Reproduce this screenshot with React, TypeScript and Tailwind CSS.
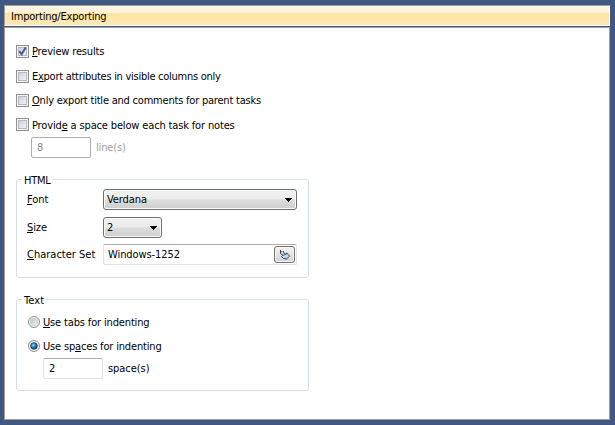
import type { ReactNode } from "react";

const U = ({ children }: { children: ReactNode }) => (
  <span className="underline decoration-1 underline-offset-[1px] [text-decoration-skip-ink:none]">{children}</span>
);

function Checkbox({ checked = false, className, children }: { checked?: boolean; className?: string; children: ReactNode }) {
  return (
    <label className={`flex h-[13px] items-center ${className ?? ""}`}>
      <svg width="13" height="13" className="shrink-0">
        <defs>
          <linearGradient id="box" x1="0" y1="0" x2="1" y2="1">
            <stop offset="0" stopColor="#cbcfd5" />
            <stop offset="1" stopColor="#f6f6f6" />
          </linearGradient>
        </defs>
        <rect x=".5" y=".5" width="12" height="12" fill="#f4f4f4" stroke="#8e8f8f" />
        <rect x="2.5" y="2.5" width="8" height="8" fill="url(#box)" stroke="#b5bac2" />
        {checked && <path d="M3.3 6.2 L5.6 9.2 L9.8 2.4" fill="none" stroke="#4a5f97" strokeWidth="2" />}
      </svg>
      <span className="ml-[3px] whitespace-nowrap">{children}</span>
    </label>
  );
}

function Radio({ checked = false, className, children }: { checked?: boolean; className?: string; children: ReactNode }) {
  return (
    <label className={`flex h-3 items-center ${className ?? ""}`}>
      <svg width="12" height="12" className="shrink-0">
        <defs>
          <linearGradient id="dot" x1="0" y1="0" x2="1" y2="1">
            <stop offset="0" stopColor="#bcc0c4" />
            <stop offset="1" stopColor="#f5f5f5" />
          </linearGradient>
          <radialGradient id="blue" cx=".4" cy=".38" r=".6">
            <stop offset="0" stopColor="#8fe4fa" />
            <stop offset=".5" stopColor="#2487b8" />
            <stop offset="1" stopColor="#0d3f68" />
          </radialGradient>
        </defs>
        <circle cx="6" cy="6" r="5.5" fill="#f4f4f4" stroke="#8e8f8f" />
        <circle cx="6" cy="6" r="3.8" fill="url(#dot)" stroke="#c3c6c9" strokeWidth=".6" />
        {checked && <circle cx="6" cy="6" r="3.3" fill="url(#blue)" stroke="#16405f" strokeWidth=".6" />}
      </svg>
      <span className="ml-[3px] whitespace-nowrap">{children}</span>
    </label>
  );
}

function Select({ className, children }: { className: string; children: ReactNode }) {
  return (
    <div className={`flex h-[21px] items-center justify-between rounded-[3px] border border-[#707070] bg-[linear-gradient(#f2f2f2_0%,#ebebeb_48%,#dddddd_52%,#cfcfcf_100%)] pr-[3px] pl-[3px] shadow-[inset_0_0_0_1px_#fafafa] ${className}`}>
      <span>{children}</span>
      <svg width="8" height="4" shapeRendering="crispEdges">
        <path d="M0 0h7v1h-1v1h-1v1h-1v1h-1v-1h-1v-1h-1v-1h-1z" />
      </svg>
    </div>
  );
}

function Group({ title, className, children }: { title: ReactNode; className: string; children: ReactNode }) {
  return (
    <fieldset className={`w-[293px] rounded-[3px] border border-[#d5dfe5] ${className}`}>
      <legend className="ml-[5px] h-[11px] px-[2px] leading-[13px]">{title}</legend>
      {children}
    </fieldset>
  );
}

function ArrowIcon() {
  return (
    <svg width="13" height="12" viewBox="0 0 13 12">
      <path d="M2.5 1v3.5l2.5 2" fill="none" stroke="#31333d" />
      <path d="M5.5 2v2l2 .8" fill="none" stroke="#3d5f86" />
      <path d="M3 2.5h2" stroke="#d58a4e" />
      <path d="M4.6 6.4l4-1.6v-1l2.9 3.4-3.6 3.3-.2-1.2-2.2.2-2-2z" fill="#b5e2f2" stroke="#30394a" strokeWidth=".9" />
    </svg>
  );
}

const inputBorder = "flex h-[21px] items-center rounded-[2px] border border-[#e2e3ea] border-t-[#abadb3] bg-white";

export default function App() {
  return (
    <div className="h-[425px] w-[615px] overflow-hidden bg-[#40587f] pt-[5px] pl-1 font-['DejaVu_Sans_Condensed','DejaVu_Sans',sans-serif] text-[11px] leading-[13px] text-black">
      <div className="flex h-[21px] w-[606px] items-center border border-t-[#a0a0a0] border-r-white border-b-white border-l-[#a0a0a0] bg-[linear-gradient(#fff5e1_0,#fff2dc_7px,#ffe3a0_7px,#ffe8b5_100%)] pt-[2px] pl-[6px]">
        <span className="tracking-[-0.2px]">Importing/Exporting</span>
      </div>
      <div className="mt-[1px] h-[393px] w-[606px] border border-[#a0a0a0] bg-white pt-[17px] pl-[11px]">
        <Checkbox checked><span className="tracking-[-0.17px]"><U>P</U>review results</span></Checkbox>
        <Checkbox className="mt-3"><span className="tracking-[-0.27px]">E<U>x</U>port attributes in visible columns only</span></Checkbox>
        <Checkbox className="mt-[11px]"><span className="tracking-[-0.21px]"><U>O</U>nly export title and comments for parent tasks</span></Checkbox>
        <Checkbox className="mt-[11px]"><span className="relative top-px tracking-[-0.15px]">Provid<U>e</U> a space below each task for notes</span></Checkbox>
        <div className="mt-[6px] ml-[15px] flex items-center text-[#8b8b8b]">
          <div className="flex h-[21px] w-[60px] items-center rounded-[2px] border border-[#afafaf] pl-[5px]">8</div>
          <span className="ml-[5px] tracking-[-0.15px] text-[#a0a0a0]">line(s)</span>
        </div>
        <Group title={<span className="tracking-[-0.3px]">HTML</span>} className="mt-[16px] h-[104px]">
          <div className="mt-[4px] ml-[10px] flex items-center">
            <span className="w-[76px] tracking-[-0.05px]"><U>F</U>ont</span>
            <Select className="w-[194px]"><span className="tracking-[-0.1px]">Verdana</span></Select>
          </div>
          <div className="mt-[7px] ml-[10px] flex items-center">
            <span className="w-[76px] tracking-[-0.1px]"><U>S</U>ize</span>
            <Select className="w-[59px]">2</Select>
          </div>
          <div className="mt-[6px] ml-[10px] flex items-center">
            <span className="w-[76px] whitespace-nowrap tracking-[0px]"><U>C</U>haracter Set</span>
            <div className={`${inputBorder} w-[194px] justify-between pr-[1px] pl-[4px]`}>
              <span className="tracking-[-0.08px]">Windows-1252</span>
              <div className="flex h-[17px] w-[21px] items-center justify-center rounded-[3px] border border-[#707070] bg-linear-to-b from-[#f4f4f4] to-[#d2d2d2] shadow-[inset_0_0_0_1px_#fafafa]">
                <ArrowIcon />
              </div>
            </div>
          </div>
        </Group>
        <Group title={<span className="tracking-[0.1px]">Text</span>} className="mt-[16px] h-[97px]">
          <Radio className="mt-[11px] ml-[11px]"><span className="tracking-[-0.15px]"><U>U</U>se tabs for indenting</span></Radio>
          <Radio checked className="mt-3 ml-[11px]"><span className="tracking-[-0.17px]">Use sp<U>a</U>ces for indenting</span></Radio>
          <div className="mt-[6px] ml-[26px] flex items-center">
            <div className={`${inputBorder} w-[60px] pl-[5px]`}>2</div>
            <span className="ml-[5px] tracking-[-0.05px]">space(s)</span>
          </div>
        </Group>
      </div>
    </div>
  );
}
